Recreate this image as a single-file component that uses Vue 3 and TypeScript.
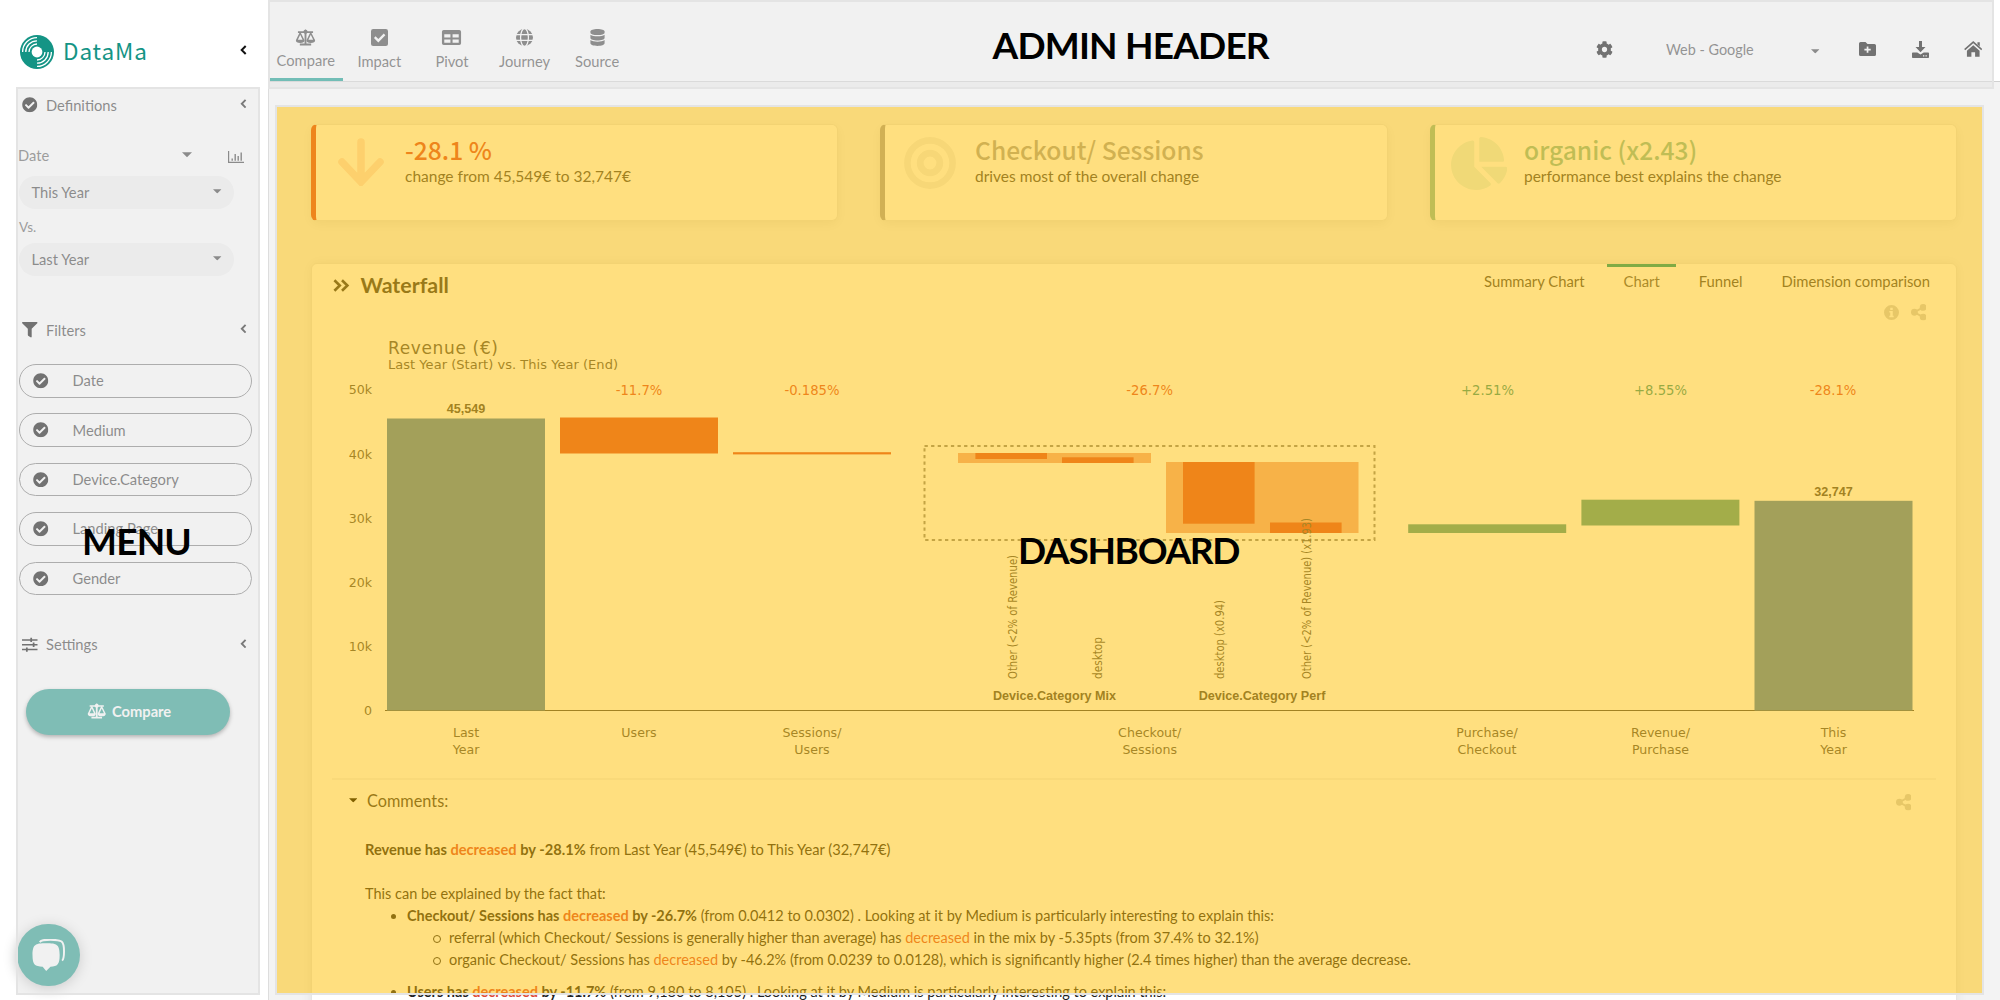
<script setup lang="ts">
interface NavItem { label: string; icon: string; active?: boolean }
interface Bar { x: number; y: number; w: number; h: number; kind: 'total' | 'down' | 'up' | 'soft' }
interface Label { x: number; text: string; tone?: 'down' | 'up' }

const nav: NavItem[] = [
  { label: 'Compare', icon: 'scale', active: true },
  { label: 'Impact', icon: 'check' },
  { label: 'Pivot', icon: 'table' },
  { label: 'Journey', icon: 'globe' },
  { label: 'Source', icon: 'database' },
]
const filters = ['Date', 'Medium', 'Device.Category', 'Landing Page', 'Gender']
const tabs = ['Summary Chart', 'Chart', 'Funnel', 'Dimension comparison']
const activeTab = 'Chart'

const bars: Bar[] = [
  { x: 387, y: 418.5, w: 158, h: 292, kind: 'total' },
  { x: 560, y: 417.5, w: 158, h: 36, kind: 'down' },
  { x: 733, y: 452.2, w: 158, h: 2.2, kind: 'down' },
  { x: 958, y: 453, w: 193, h: 10, kind: 'soft' },
  { x: 975.4, y: 453, w: 71.6, h: 6, kind: 'down' },
  { x: 1062, y: 457.3, w: 71.6, h: 5.7, kind: 'down' },
  { x: 1166, y: 462, w: 192.5, h: 71, kind: 'soft' },
  { x: 1183, y: 462, w: 71.6, h: 61.7, kind: 'down' },
  { x: 1270, y: 522.5, w: 71.6, h: 10.5, kind: 'down' },
  { x: 1408.2, y: 524.3, w: 158, h: 8.7, kind: 'up' },
  { x: 1581.4, y: 499.7, w: 158, h: 25.8, kind: 'up' },
  { x: 1754.5, y: 500.8, w: 158, h: 209.7, kind: 'total' },
]
const changes: Label[] = [
  { x: 639, text: '-11.7%', tone: 'down' },
  { x: 812, text: '-0.185%', tone: 'down' },
  { x: 1149.7, text: '-26.7%', tone: 'down' },
  { x: 1487.5, text: '+2.51%', tone: 'up' },
  { x: 1660.5, text: '+8.55%', tone: 'up' },
  { x: 1833, text: '-28.1%', tone: 'down' },
]
const ticks = [
  { y: 394, text: '50k' },
  { y: 459, text: '40k' },
  { y: 523, text: '30k' },
  { y: 587, text: '20k' },
  { y: 651, text: '10k' },
  { y: 715, text: '0' },
]
const categories = [
  { x: 466, lines: ['Last', 'Year'] },
  { x: 639, lines: ['Users'] },
  { x: 812, lines: ['Sessions/', 'Users'] },
  { x: 1149.7, lines: ['Checkout/', 'Sessions'] },
  { x: 1487, lines: ['Purchase/', 'Checkout'] },
  { x: 1660.5, lines: ['Revenue/', 'Purchase'] },
  { x: 1833.5, lines: ['This', 'Year'] },
]
const segments = [
  { x: 1017, len: 124, text: 'Other (<2% of Revenue)' },
  { x: 1102, len: 42, text: 'desktop' },
  { x: 1223.5, len: 79, text: 'desktop (x0.94)' },
  { x: 1311, len: 161, text: 'Other (<2% of Revenue) (x1.93)' },
]
</script>

<template>
  <div class="app">
    <svg class="sprite" width="0" height="0" aria-hidden="true">
      <symbol id="scale" viewBox="0 0 22 18">
        <path d="M3 2.4h16v1.8H3zM10 1.4a1 1 0 0 1 2 0V16h-2zM5 15.4h12v2.1H5z" />
        <circle cx="11" cy="3" r="2.2" />
        <path fill-rule="evenodd" d="M5 3.6h.9L10 12a4.6 2.9 0 0 1-9.2 0L4.8 3.6zM5.4 6.2L2.9 11.4h5z" />
        <path fill-rule="evenodd" d="M16.1 3.6h.9L21.2 12a4.6 2.9 0 0 1-9.2 0L16 3.6zM16.6 6.2l-2.5 5.2h5z" />
      </symbol>
      <symbol id="check" viewBox="0 0 16 16">
        <path fill-rule="evenodd" d="M2 0h12a2 2 0 0 1 2 2v12a2 2 0 0 1-2 2H2a2 2 0 0 1-2-2V2a2 2 0 0 1 2-2zM6.9 12.6l6.6-6.7-1.5-1.6-5.1 5.2-2.6-2.6-1.5 1.5z" />
      </symbol>
      <symbol id="table" viewBox="0 0 18 16">
        <path fill-rule="evenodd" d="M1.7 1h14.6A1.7 1.7 0 0 1 18 2.7v10.6a1.7 1.7 0 0 1-1.7 1.7H1.7A1.7 1.7 0 0 1 0 13.3V2.7A1.7 1.7 0 0 1 1.7 1zM2.2 5v3H8V5zM10 5v3h5.8V5zM2.2 9.9v3H8v-3zM10 9.9v3h5.8v-3z" />
      </symbol>
      <symbol id="globe" viewBox="0 0 16 16">
        <circle cx="8" cy="8" r="8" />
        <g class="cut">
          <ellipse cx="8" cy="8" rx="3.7" ry="8.3" />
          <path d="M0 5.2h16M0 10.8h16" />
        </g>
      </symbol>
      <symbol id="database" viewBox="0 0 16 18">
        <path d="M.5 2.6C.5 1 3.8 0 8 0s7.500 1 7.500 2.600v1.300C15.500 5.400 12.200 6.400 8 6.400S.5 5.400.5 3.900z" />
        <path d="M.5 6c1.600 1.200 4.500 1.700 7.500 1.700s5.900-.5 7.500-1.700v3.500c0 1.500-3.300 2.600-7.500 2.600S.5 11 .5 9.500z" />
        <path d="M.5 11.700c1.600 1.200 4.500 1.700 7.500 1.700s5.900-.5 7.500-1.700v3.500c0 1.600-3.300 2.800-7.500 2.800S.5 16.800.5 15.200z" />
      </symbol>
      <symbol id="chevron" viewBox="0 0 7 10">
        <path d="M5.700 1L1.700 5l4 4" fill="none" stroke="currentColor" stroke-width="2" />
      </symbol>
      <symbol id="caret" viewBox="0 0 10 5"><path d="M0 0h10L5 5z" /></symbol>
      <symbol id="badge" viewBox="0 0 512 512">
        <path d="M504 256c0 136.967-111.033 248-248 248S8 392.967 8 256 119.033 8 256 8s248 111.033 248 248zM227.314 387.314l184-184c6.248-6.248 6.248-16.379 0-22.627l-22.627-22.627c-6.248-6.249-16.379-6.249-22.628 0L216 308.118l-70.059-70.059c-6.248-6.248-16.379-6.248-22.628 0l-22.627 22.627c-6.248 6.248-6.248 16.379 0 22.627l104 104c6.249 6.249 16.379 6.249 22.628.001z" />
      </symbol>
      <symbol id="share" viewBox="0 0 16 17">
        <circle cx="3.500" cy="8.500" r="3.500" /><circle cx="12.500" cy="3.500" r="3.500" /><circle cx="12.500" cy="13.500" r="3.500" />
        <path d="M12.500 3.500l-9 5 9 5" fill="none" stroke="currentColor" stroke-width="2" />
      </symbol>
    </svg>

    <aside class="sidebar">
      <div class="brand">
        <svg class="logo" viewBox="0 0 34 34">
          <circle cx="17" cy="17" r="17" fill="#149485" />
          <circle cx="17" cy="17" r="5.400" fill="#fff" />
          <g fill="none" stroke="#fff" stroke-width="1.300">
            <path d="M9 17a8 8 0 0 1 8-8M5.800 17A11.200 11.200 0 0 1 17 5.800M2.600 17A14.400 14.400 0 0 1 17 2.600" />
            <path d="M25 17a8 8 0 0 1-8 8M28.200 17A11.200 11.200 0 0 1 17 28.200M31.400 17A14.400 14.400 0 0 1 17 31.400" />
          </g>
        </svg>
        <span class="brand-name">DataMa</span>
        <svg class="chev"><use href="#chevron" /></svg>
      </div>

      <div class="menu">
        <div class="group">
          <svg class="gicon"><use href="#badge" /></svg><span>Definitions</span>
          <svg class="chev"><use href="#chevron" /></svg>
        </div>
        <div class="date-row">
          <span>Date</span>
          <svg class="caret big"><use href="#caret" /></svg>
          <svg class="mini-chart" viewBox="0 0 16 12">
            <path d="M.6 0v11.400H16" fill="none" stroke="currentColor" stroke-width="1.200" />
            <path d="M4.200 9.800V7.500M7.200 9.800V3M10.200 9.800V5M13.200 9.800V1.500" stroke="currentColor" stroke-width="1.400" />
          </svg>
        </div>
        <div class="select"><span>This Year</span><svg class="caret"><use href="#caret" /></svg></div>
        <div class="vs">Vs.</div>
        <div class="select"><span>Last Year</span><svg class="caret"><use href="#caret" /></svg></div>

        <div class="group filters-head">
          <svg class="gicon" viewBox="0 0 512 512"><path d="M487.976 0H24.028C2.710 0-8.047 25.866 7.058 40.971L192 225.941V432c0 7.831 3.821 15.170 10.237 19.662l80 55.980C298.020 518.690 320 507.493 320 487.980V225.941l184.947-184.970C520.021 25.896 509.338 0 487.976 0z" /></svg>
          <span>Filters</span>
          <svg class="chev"><use href="#chevron" /></svg>
        </div>
        <div class="pills">
          <div v-for="f in filters" :key="f" class="pill">
            <svg class="gicon"><use href="#badge" /></svg><span>{{ f }}</span>
          </div>
        </div>

        <div class="group settings-head">
          <svg class="gicon" viewBox="0 0 16 16">
            <path d="M0 3h16M0 8h16M0 13h16" stroke="currentColor" stroke-width="1.500" />
            <path d="M9.500 .8v4.400M12 5.800v4.400M5 10.800v4.400" stroke="currentColor" stroke-width="1.800" />
          </svg>
          <span>Settings</span>
          <svg class="chev"><use href="#chevron" /></svg>
        </div>
        <button class="run" type="button">
          <svg class="run-icon"><use href="#scale" /></svg>Compare
        </button>
      </div>
    </aside>

    <main class="main">
      <header class="topbar">
        <nav class="nav">
          <a v-for="n in nav" :key="n.label" class="nav-item" :class="{ active: n.active }">
            <svg class="nav-icon"><use :href="'#' + n.icon" /></svg>
            <span>{{ n.label }}</span>
          </a>
        </nav>
        <div class="tools">
          <svg class="cog" viewBox="0 0 512 512"><path d="M487.400 315.700l-42.600-24.600c4.300-23.200 4.300-47 0-70.200l42.600-24.600c4.900-2.800 7.100-8.600 5.500-14-11.100-35.600-30-67.800-54.700-94.600-3.800-4.100-10-5.100-14.800-2.300L380.800 110c-17.900-15.400-38.500-27.300-60.800-35.100V25.800c0-5.600-3.900-10.500-9.400-11.700-36.700-8.200-74.300-7.800-109.200 0-5.500 1.200-9.400 6.100-9.400 11.700V75c-22.200 7.900-42.800 19.800-60.800 35.100L88.700 85.500c-4.900-2.800-11-1.900-14.800 2.300-24.700 26.700-43.600 58.900-54.700 94.600-1.700 5.400.6 11.200 5.500 14L67.300 221c-4.300 23.200-4.300 47 0 70.200l-42.600 24.600c-4.900 2.800-7.100 8.600-5.500 14 11.100 35.600 30 67.800 54.700 94.600 3.800 4.100 10 5.100 14.800 2.300l42.600-24.600c17.900 15.400 38.500 27.300 60.800 35.100v49.200c0 5.600 3.900 10.500 9.400 11.700 36.700 8.200 74.300 7.800 109.200 0 5.500-1.200 9.400-6.100 9.400-11.700v-49.200c22.200-7.900 42.800-19.800 60.800-35.100l42.600 24.600c4.900 2.800 11 1.900 14.800-2.300 24.700-26.700 43.600-58.900 54.700-94.600 1.500-5.500-.7-11.300-5.600-14.100zM256 336c-44.100 0-80-35.900-80-80s35.900-80 80-80 80 35.900 80 80-35.900 80-80 80z" /></svg>
          <span class="project">Web - Google</span>
          <svg class="caret project-caret"><use href="#caret" /></svg>
          <svg class="folder" viewBox="0 0 17 14"><path fill-rule="evenodd" d="M1.600 0h4.900l2 2h6.900A1.600 1.600 0 0 1 17 3.600v8.800a1.600 1.600 0 0 1-1.600 1.600H1.600A1.600 1.600 0 0 1 0 12.400V1.600A1.600 1.600 0 0 1 1.600 0zM7.700 4.500v2.300H5.400v1.700h2.300v2.300h1.700V8.500h2.300V6.800H9.400V4.500z" /></svg>
          <svg class="download" viewBox="0 0 17 17"><path d="M7 0h3v6h3.500l-5 5.200L3.500 6H7z" /><path fill-rule="evenodd" d="M.8 11.500h4.500l3.200 2 3.200-2h4.500a.8.8 0 0 1 .8.800v3.900a.8.8 0 0 1-.8.800H.8a.8.8 0 0 1-.8-.8v-3.900a.8.8 0 0 1 .8-.8zM11 14.300v1.200h1.300v-1.200zM13.500 14.300v1.200h1.300v-1.200z" /></svg>
          <svg class="home" viewBox="0 0 19 16"><path d="M.7 8.600L9.500 1l8.800 7.600" fill="none" stroke="currentColor" stroke-width="1.700" /><path d="M13.800 1h2.400v4.500l-2.400-2z" /><path d="M9.500 4.200L16 9.800V16h-4.600v-4.600H7.600V16H3V9.800z" /></svg>
        </div>
      </header>

      <section class="content">
        <div class="cards">
          <article class="card drop">
            <svg class="card-icon arrow" viewBox="0 0 46 48"><path d="M23 4v38M4 24l19 20 19-20" fill="none" stroke="currentColor" stroke-width="7.500" stroke-linecap="round" stroke-linejoin="miter" /></svg>
            <div><h2>-28.1 %</h2><p>change from 45,549€ to 32,747€</p></div>
          </article>
          <article class="card driver">
            <svg class="card-icon target" viewBox="0 0 52 52"><g fill="none" stroke="currentColor"><circle cx="26" cy="26" r="22.600" stroke-width="6.600" /><circle cx="26" cy="26" r="9.800" stroke-width="6.800" /></g></svg>
            <div><h2>Checkout/ Sessions</h2><p>drives most of the overall change</p></div>
          </article>
          <article class="card best">
            <svg class="card-icon pie" viewBox="0 0 544 512"><path d="M527.790 288H290.500l158.030 158.030c6.040 6.040 15.980 6.530 22.190.68 38.700-36.460 65.320-85.610 73.130-140.860 1.340-9.460-6.510-17.850-16.060-17.850zm-15.830-64.800C503.720 103.740 408.260 8.280 288.800.04 279.680-.59 272 7.100 272 16.240V240h223.770c9.140 0 16.820-7.680 16.190-16.800zM224 288V50.710c0-9.550-8.390-17.400-17.840-16.060C86.990 51.490-4.100 155.600.14 280.370 4.500 408.510 114.830 513.590 243.030 511.980c50.400-.63 96.970-16.870 135.260-44.030 7.900-5.600 8.420-17.230 1.570-24.080L224 288z" /></svg>
            <div><h2>organic (x2.43)</h2><p>performance best explains the change</p></div>
          </article>
        </div>

        <section class="panel">
          <div class="panel-head">
            <h3>
              <svg class="dbl" viewBox="0 0 17 13"><path d="M1.400 1.200l5.400 5.300-5.400 5.300M9 1.200l5.400 5.300L9 11.800" fill="none" stroke="currentColor" stroke-width="2.600" /></svg>
              Waterfall
            </h3>
            <div class="tabs">
              <span v-for="t in tabs" :key="t" class="tab" :class="{ on: t === activeTab }">{{ t }}</span>
            </div>
          </div>
          <div class="actions">
            <svg class="info" viewBox="0 0 16 16"><path fill-rule="evenodd" d="M8 0a8 8 0 1 1 0 16A8 8 0 0 1 8 0zM6.700 2.900v2.400h2.600V2.900zM5.700 6.500v1.600h1v3.300h-1V13h4.600v-1.600h-1V6.500z" /></svg>
            <svg class="share"><use href="#share" /></svg>
          </div>

          <svg class="chart" viewBox="312 325 1644 453">
            <text class="title" x="388" y="353.500" textLength="110">Revenue (€)</text>
            <text class="sub" x="388" y="369" textLength="230">Last Year (Start) vs. This Year (End)</text>
            <text v-for="t in ticks" :key="t.text" class="axis end" x="372" :y="t.y">{{ t.text }}</text>
            <text v-for="c in changes" :key="c.text" class="pct mid" :class="c.tone" :x="c.x" y="395">{{ c.text }}</text>
            <line class="base" x1="385" x2="1914" y1="710.500" y2="710.500" />
            <rect v-for="(b, i) in bars" :key="i" :class="b.kind" :x="b.x" :y="b.y" :width="b.w" :height="b.h" />
            <rect class="frame" x="924.500" y="446" width="450" height="94" />
            <text class="num mid" x="466" y="413">45,549</text>
            <text class="num mid" x="1833.500" y="495.500">32,747</text>
            <text
              v-for="s in segments" :key="s.text" class="seg" :textLength="s.len" lengthAdjust="spacingAndGlyphs"
              :transform="`translate(${s.x} 679) rotate(-90)`"
            >{{ s.text }}</text>
            <text class="num mid" x="1054.500" y="700">Device.Category Mix</text>
            <text class="num mid" x="1262" y="700">Device.Category Perf</text>
            <template v-for="c in categories" :key="c.x">
              <text v-for="(l, i) in c.lines" :key="l" class="axis mid" :x="c.x" :y="737 + i * 17">{{ l }}</text>
            </template>
          </svg>

          <div class="comments">
            <div class="comments-head">
              <svg class="caret"><use href="#caret" /></svg><span>Comments:</span>
              <svg class="share"><use href="#share" /></svg>
            </div>
            <div class="story">
              <p class="summary"><b>Revenue has <em>decreased</em> by -28.1%</b> from Last Year (45,549€) to This Year (32,747€)</p>
              <p class="lead">This can be explained by the fact that:</p>
              <ul>
                <li>
                  <b>Checkout/ Sessions has <em>decreased</em> by -26.7%</b> (from 0.0412 to 0.0302) . Looking at it by Medium is particularly interesting to explain this:
                  <ul>
                    <li>referral (which Checkout/ Sessions is generally higher than average) has <em>decreased</em> in the mix by -5.35pts (from 37.4% to 32.1%)</li>
                    <li>organic Checkout/ Sessions has <em>decreased</em> by -46.2% (from 0.0239 to 0.0128), which is significantly higher (2.4 times higher) than the average decrease.</li>
                  </ul>
                </li>
                <li><b>Users has <em>decreased</em> by -11.7%</b> (from 9,180 to 8,105) . Looking at it by Medium is particularly interesting to explain this:</li>
              </ul>
            </div>
          </div>
        </section>
      </section>
    </main>

    <div class="chat">
      <svg viewBox="0 0 34 33">
        <path d="M8 3.200C9.500 1 12 .8 19 .8c12 0 14 1 14 12 0 5-.2 8-2 9.500" fill="none" stroke="#fff" stroke-width="2" />
        <path d="M14.500 4.500c11 0 14 1.200 14 12 0 10-2.200 11.700-9.500 12L14.600 33l-3.600-4.500C3 28.300.5 26.500.5 16.500c0-10.800 3-12 14-12z" fill="#fff" />
      </svg>
    </div>

    <div class="zone zone-menu"><span>MENU</span></div>
    <div class="zone zone-header"><span>ADMIN HEADER</span></div>
    <div class="zone zone-dashboard"><span>DASHBOARD</span></div>
  </div>
</template>

<style>
body { background: #fff; }
</style>

<style scoped>
* { box-sizing: border-box; }
.app { position: relative; display: flex; width: 2000px; height: 1000px; overflow: hidden; background: #fff; color: #222; font: 14.7px/24px Lato, sans-serif; }
.sprite { position: absolute; }
svg { fill: currentColor; flex: none; display: block; }
.sidebar { width: 268px; flex: none; color: #333; }
.brand { display: flex; align-items: center; height: 87px; padding: 16px 21px 0 20px; }
.logo { width: 34px; height: 34px; }
.brand-name { margin: -4px 0 0 9px; color: #149485; font: 22.5px/30px "Noto Sans CJK SC", sans-serif; letter-spacing: .9px; }
.chev { width: 7px; height: 10px; margin-left: auto; color: #111; }
.brand .chev { margin-bottom: 3px; }
.menu { padding: 0 21px 0 18px; }
.group { display: flex; align-items: center; height: 24px; margin-top: 6px; padding-left: 4px; }
.group span, .pill span { margin-top: -1px; }
.gicon { width: 15.5px; height: 15.5px; margin-right: 8.500px; color: #000; }
.menu .group .chev { height: 9.500px; margin-bottom: 2px; }
.date-row { display: flex; align-items: center; height: 24px; margin-top: 26px; }
.date-row span { width: 164px; color: #555; }
.caret { width: 8.500px; height: 4.500px; }
.caret.big { width: 10px; height: 5.500px; }
.mini-chart { width: 16px; height: 12px; margin: 3px 3px 0 auto; }
.select { display: flex; align-items: center; justify-content: space-between; width: 215px; height: 33px; margin: 9px 0 0 1px; padding: 0 12.500px 2px; border-radius: 17px; background: #f2f2f2; }
.vs { height: 20px; margin: 8px 0 -3px 1px; font-size: 13.500px; line-height: 20px; color: #555; }
.filters-head { margin-top: 42px; }
.pills { display: flex; flex-direction: column; gap: 15.900px; margin: 22px -4px 0 1px; }
.pill { display: flex; align-items: center; width: 233px; height: 33.500px; padding-left: 13px; border: 1px solid #777; border-radius: 17px; }
.pill .gicon { margin-right: 24px; }
.settings-head { margin-top: 37.500px; }
.run { display: flex; align-items: center; width: 204px; height: 46px; margin: 32px 0 0 8px; padding: 0 0 1px 61px; border: 0; border-radius: 23px; background: #1a9686; color: #fff; font: bold 14.700px/20px Lato, sans-serif; box-shadow: 0 2px 4px rgba(0, 0, 0, .5); }
.run-icon { width: 19.500px; height: 16px; margin-right: 5.500px; }

.main { flex: 1; border-left: 1px solid #ddd; background: #f3f3f3; }
.topbar { display: flex; justify-content: space-between; height: 82px; background: #fff; border-bottom: 1px solid #d0d0d0; }
.nav { display: flex; padding-left: 1px; }
.nav-item { display: flex; flex-direction: column; align-items: center; width: 72.600px; padding-top: 28.500px; color: #444; line-height: 20px; }
.nav-icon { width: 21px; height: 17px; margin-bottom: 5px; color: #383838; }
.nav-item.active { width: 73.600px; margin: 0 0 0 -.500px; padding-right: 1px; border-bottom: 3px solid #009688; }
.nav-item.active .nav-icon { margin-bottom: 4px; }
.cut { fill: none; stroke: #fff; stroke-width: 1.200; }
.tools { display: flex; align-items: center; padding: 17px 18.500px 0 0; color: #000; }
.cog { width: 17px; height: 17px; }
.project { width: 88px; margin: 2px 0 0 53px; font-size: 14.400px; color: #444; white-space: nowrap; }
.project-caret { margin: 5px 39.500px 0 57px; color: #333; }
.folder { width: 17px; height: 14px; }
.download { width: 17px; height: 17px; margin-left: 35.500px; }
.home { width: 18.500px; height: 16px; margin-left: 35px; }

.content { padding: 42px 43.500px 0 41.500px; }
.cards { display: grid; grid-template-columns: 527.500px 507.500px 527px; column-gap: 42px; }
.card { display: flex; height: 97px; border: 1px solid #e6e6e6; border-left: 5px solid; border-radius: 6px; background: #fff; box-shadow: 0 3px 12px rgba(0, 0, 0, .07); }
.card h2 { margin: 11px 0 0; font: 500 24.600px/26px "Noto Sans CJK SC", sans-serif; }
.card p { margin: 2.500px 0 0; font-size: 15.500px; line-height: 22px; color: #444; }
.card-icon { margin-top: 11.500px; }
.drop { border-left-color: #dd4b39; }
.drop h2 { color: #dd4b39; }
.arrow { width: 46px; height: 48px; margin: 12.500px 21.500px 0 22px; color: #fbe0da; }
.driver { border-left-color: #a3a0a8; }
.driver h2 { color: #a3a3a3; }
.target { width: 52px; height: 52px; margin-left: 19px; margin-right: 19px; color: #eee; }
.best { border-left-color: #81bbaa; }
.best h2 { color: #81bbaa; }
.pie { width: 56.500px; height: 53px; margin-left: 16px; margin-right: 17px; color: #e1f2ee; }

.panel { height: 800px; margin-top: 42px; border: 1px solid #e6e6e6; border-radius: 6px; background: #fff; box-shadow: 0 0 12px rgba(0, 0, 0, .07); }
.panel-head { display: flex; justify-content: space-between; height: 36px; padding: 0 9.500px 0 21px; }
.panel-head h3 { display: flex; align-items: center; margin: 5.500px 0 0; height: 31px; font: bold 21.400px/31px Lato, sans-serif; color: #333; }
.dbl { width: 17px; height: 13px; margin: 1px 11px 0 0; }
.tabs { display: flex; gap: 6px; }
.tab { padding: 0 16.500px; border-top: 3px solid transparent; font-size: 14.800px; line-height: 28px; color: #444; }
.tab.on { border-top-color: #009688; color: #555; }
.actions { display: flex; justify-content: flex-end; align-items: center; gap: 12px; height: 25px; padding-right: 30px; color: #cfcfcf; }
.info { width: 15px; height: 15px; }
.share { width: 15.500px; height: 16.500px; }

.chart { width: 1644px; height: 453px; margin-left: .500px; font-family: "DejaVu Sans", Verdana, sans-serif; fill: #4d4d4d; }
.title { font-size: 17px; }
.sub { font-size: 13px; }
.axis { font-size: 12.600px; }
.pct { font-size: 13.200px; }
.pct.down { fill: #dd4b39; }
.pct.up { fill: #2f9488; }
.mid { text-anchor: middle; }
.end { text-anchor: end; }
.num { font: bold 12.600px "Liberation Sans", Arial, sans-serif; fill: #444; }
.seg { font-size: 11.500px; }
rect.total { fill: #4780b4; }
rect.down { fill: #df4b32; }
rect.soft { fill: #ed9f90; fill: #eea21c; fill: #eea490; }
rect.up { fill: #479a92; }
.frame { fill: none; stroke: #888; stroke-width: 2; stroke-dasharray: 3.300 3.300; }
.base { stroke: #444; stroke-width: 1; }

.comments { margin: 0 20px; border-top: 2px solid #f3f3f3; }
.comments-head { display: flex; align-items: center; height: 24px; margin: 8.500px 25px 0 17px; font-size: 16.300px; color: #333; }
.comments-head .caret { margin-right: 10px; color: #000; }
.comments-head .share { margin: 4px 0 0 auto; color: #cfcfcf; }
.story { margin: 26px 0 0 33.500px; font-size: 14.500px; line-height: 22px; white-space: nowrap; }
.story p { margin: 0; }
.story .summary { font-size: 14.650px; }
.story .lead { margin-top: 22px; }
.story em { font-style: normal; color: #dd4b39; }
.story ul { margin: 0; padding: 0 0 0 42px; list-style: none; }
.story li { position: relative; }
.story li::before { content: ""; position: absolute; left: -16.500px; top: 9px; width: 5.500px; height: 5.500px; border-radius: 50%; background: #222; }
.story li li::before { left: -16.500px; background: none; border: 1px solid #222; width: 6px; height: 6px; top: 8.500px; }
.story > ul > li + li { margin-top: 10px; }

.chat { position: absolute; left: 17px; top: 923.500px; width: 62.500px; height: 62.500px; display: grid; place-items: center; border-radius: 50%; background: #1a9686; box-shadow: 0 2px 14px rgba(0, 0, 0, .3); }
.chat svg { width: 33px; height: 32px; }

.zone { position: absolute; display: grid; border: 2px solid #e4e4e4; background: rgba(228, 228, 228, .5); color: #000; font: bold 37px/44px Lato, sans-serif; white-space: nowrap; }
.zone-menu { left: 16px; top: 87px; width: 244px; height: 908px; padding: 429.500px 0 0 64px; align-content: start; letter-spacing: -.800px; }
.zone-header { left: 268px; top: 0; width: 1726px; height: 89px; padding: 21px 0 0 722.500px; align-content: start; letter-spacing: -.800px; }
.zone-dashboard { left: 275px; top: 105px; width: 1709px; height: 890px; padding: 420.500px 0 0 741px; align-content: start; letter-spacing: -1.300px; background: rgba(255, 192, 0, .5); background-clip: padding-box; }
</style>
